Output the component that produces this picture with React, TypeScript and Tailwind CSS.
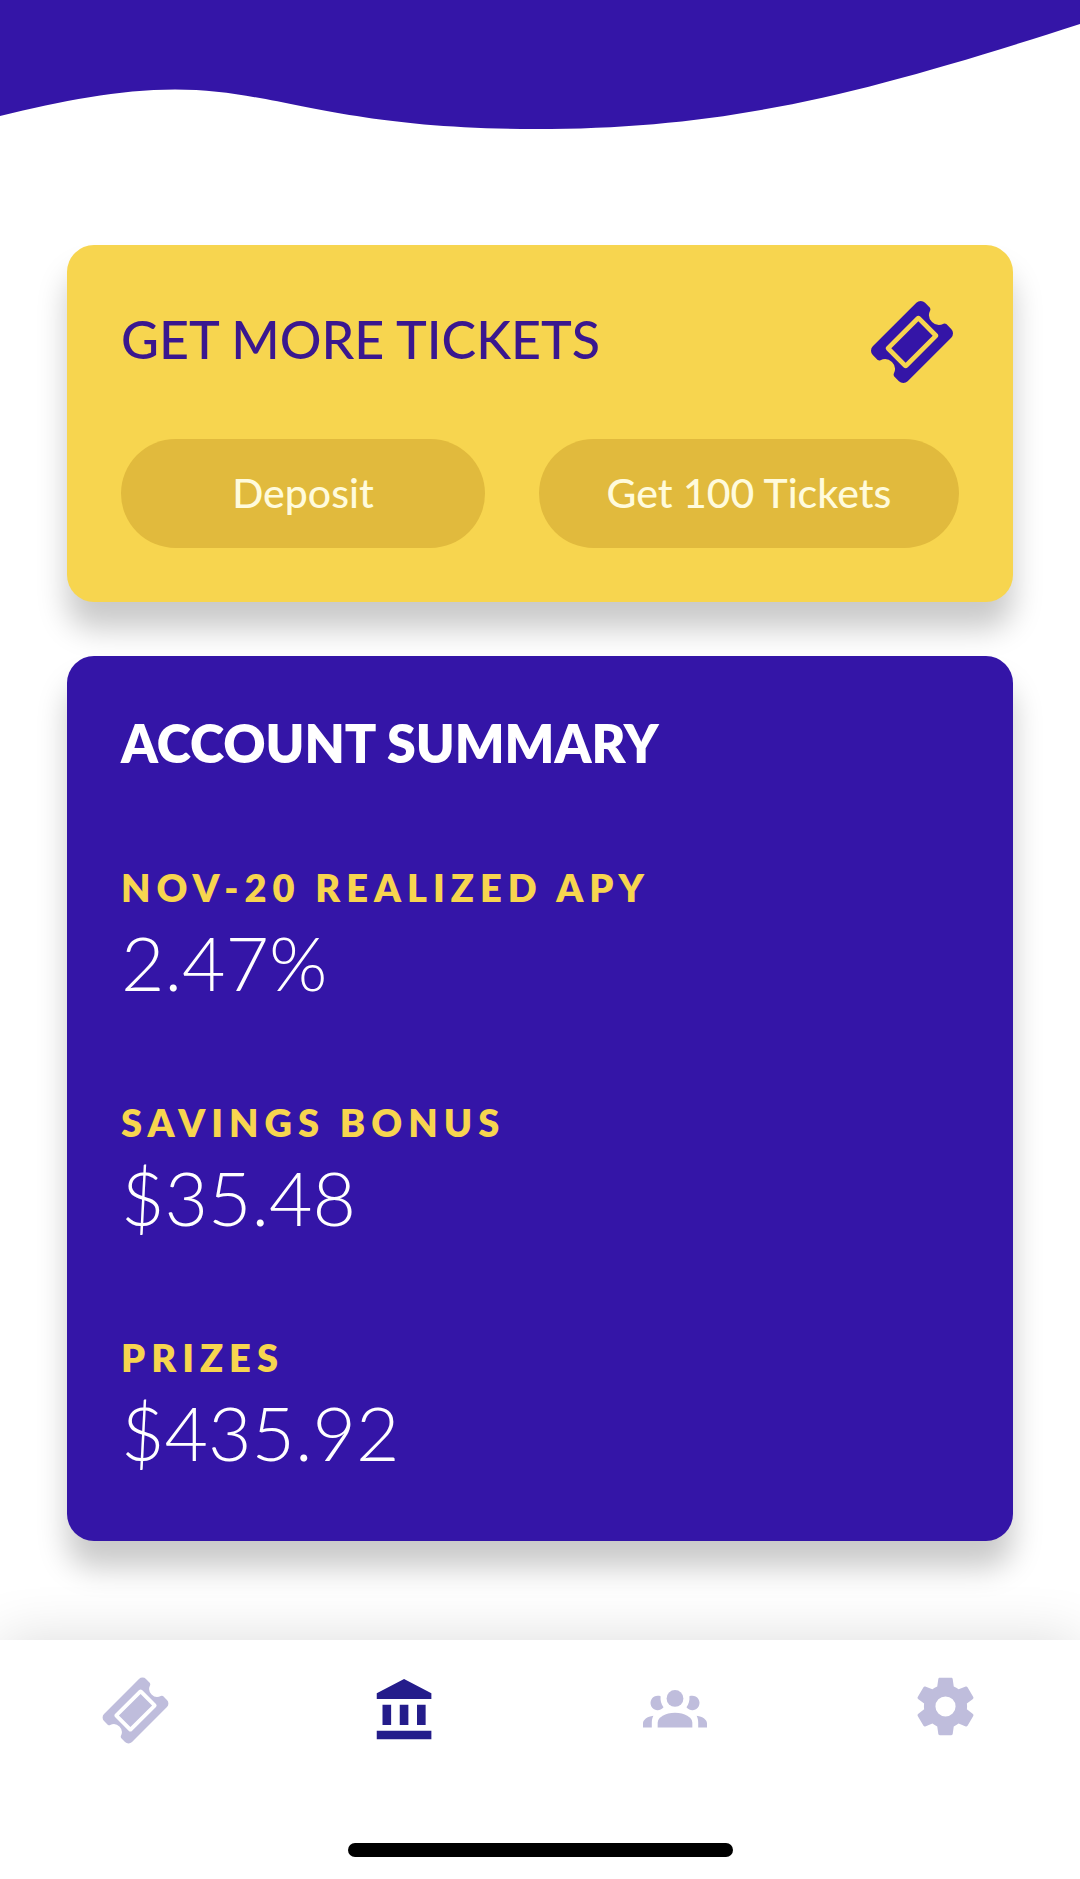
import React from "react";
import type { ReactNode } from "react";

type Stat = {
  label: string;
  value: string;
};

type Tab = {
  name: string;
  href: string;
  icon: ReactNode;
  active?: boolean;
};

type IconProps = {
  className?: string;
};

const stats: Stat[] = [
  { label: "NOV-20 REALIZED APY", value: "2.47%" },
  { label: "SAVINGS BONUS", value: "$35.48" },
  { label: "PRIZES", value: "$435.92" },
];

const cardClassName =
  "rounded-[27px] px-[54px] shadow-[0_27px_30px_rgba(0,0,0,0.21)]";
const pillClassName =
  "h-[109px] rounded-full bg-[#e1ba3d] pb-0.5 text-[41px] font-medium text-[#fffbdc]";

function TicketIcon({ className }: IconProps) {
  return (
    <svg viewBox="-335 -335 670 670" fill="currentColor" className={className}>
      <g transform="rotate(-45)">
        <path
          fillRule="evenodd"
          d="M-240-192H240a48 48 0 0 1 48 48V-90q-6 14-14 16A78 78 0 0 0 274 74q8 2 14 16V144a48 48 0 0 1-48 48H-240a48 48 0 0 1-48-48V90q6-14 14-16A78 78 0 0 0-274-74q-8-2-14-16V-144a48 48 0 0 1 48-48zM-162-116a24 24 0 0 0-24 24V92a24 24 0 0 0 24 24H162a24 24 0 0 0 24-24V-92a24 24 0 0 0-24-24zM-149-79H149V79H-149z"
        />
      </g>
    </svg>
  );
}

function BankIcon({ className }: IconProps) {
  return (
    <svg viewBox="0 0 24 24" fill="currentColor" className={className}>
      <path d="M11.5 1 2 6v2h19V6M16 10v7h3v-7M2 22h19v-3H2M10 10v7h3v-7M4 10v7h3v-7H4z" />
    </svg>
  );
}

function GroupIcon({ className }: IconProps) {
  return (
    <svg viewBox="0 1.8 24 24" fill="currentColor" className={className}>
      <circle cx="12" cy="9.1" r="3.15" />
      <path d="M5.6 8.1c.35 0 .68.06 1 .18-.15 1.5.2 2.9 1.1 4.1A2.7 2.7 0 1 1 5.6 8.1z" />
      <path d="M18.4 8.1c-.35 0-.68.06-1 .18.15 1.5-.2 2.9-1.1 4.1A2.7 2.7 0 1 0 18.4 8.1z" />
      <path d="M5.5 18.25c0-2.07 2.91-3.75 6.5-3.75s6.5 1.68 6.5 3.75V20h-13v-1.75z" />
      <path d="M0 20v-1.5c0-1.39 1.5-2.56 3.9-2.9-.4.68-.6 1.62-.6 2.65V20H0z" />
      <path d="M24 20v-1.5c0-1.39-1.5-2.56-3.9-2.9.4.68.6 1.62.6 2.65V20H24z" />
    </svg>
  );
}

function CogIcon({ className }: IconProps) {
  return (
    <svg viewBox="0 1.4 24 24" fill="currentColor" className={className}>
      <path d="M12,15.5A3.5,3.5 0 0,1 8.5,12A3.5,3.5 0 0,1 12,8.5A3.5,3.5 0 0,1 15.5,12A3.5,3.5 0 0,1 12,15.5M19.43,12.97C19.47,12.65 19.5,12.33 19.5,12C19.5,11.67 19.47,11.34 19.43,11L21.54,9.37C21.73,9.22 21.78,8.95 21.66,8.73L19.66,5.27C19.54,5.05 19.27,4.96 19.05,5.05L16.56,6.05C16.04,5.66 15.5,5.32 14.87,5.07L14.5,2.42C14.46,2.18 14.25,2 14,2H10C9.75,2 9.54,2.18 9.5,2.42L9.13,5.07C8.5,5.32 7.96,5.66 7.44,6.05L4.95,5.05C4.73,4.96 4.46,5.05 4.34,5.27L2.34,8.73C2.21,8.95 2.27,9.22 2.46,9.37L4.57,11C4.53,11.34 4.5,11.67 4.5,12C4.5,12.33 4.53,12.65 4.57,12.97L2.46,14.63C2.27,14.78 2.21,15.05 2.34,15.27L4.34,18.73C4.46,18.95 4.73,19.03 4.95,18.95L7.44,17.94C7.96,18.34 8.5,18.68 9.13,18.93L9.5,21.58C9.54,21.82 9.75,22 10,22H14C14.25,22 14.46,21.82 14.5,21.58L14.87,18.93C15.5,18.67 16.04,18.34 16.56,17.94L19.05,18.95C19.27,19.03 19.54,18.95 19.66,18.73L21.66,15.27C21.78,15.05 21.73,14.78 21.54,14.63L19.43,12.97Z" />
    </svg>
  );
}

const tabs: Tab[] = [
  {
    name: "Tickets",
    href: "#tickets",
    icon: <TicketIcon className="size-[69px]" />,
  },
  {
    name: "Account",
    href: "#account",
    icon: <BankIcon className="size-[69px]" />,
    active: true,
  },
  {
    name: "Community",
    href: "#community",
    icon: <GroupIcon className="size-16" />,
  },
  {
    name: "Settings",
    href: "#settings",
    icon: <CogIcon className="size-[69px]" />,
  },
];

function Wave() {
  return (
    <svg
      viewBox="0 0 1080 130"
      preserveAspectRatio="none"
      className="block h-[130px] w-full text-[#3415a7]"
      fill="currentColor"
      aria-hidden="true"
    >
      <path d="M0 0H1080V24C865 93 731 129 535 129C333 129 277 89.5 175 89.5C118 89.5 62 101 0 116Z" />
    </svg>
  );
}

function TicketsCard() {
  return (
    <section className={`${cardClassName} bg-[#f7d54f] py-[54px]`}>
      <div className="flex items-start justify-between">
        <h2 className="text-[52px] leading-[80px] font-medium text-[#3a178f]">
          GET MORE TICKETS
        </h2>
        <TicketIcon className="mr-1 size-[86px] text-[#3415a7]" />
      </div>
      <div className="mt-[54px] flex gap-[54px]">
        <button type="button" className={`${pillClassName} flex-[13]`}>
          Deposit
        </button>
        <button type="button" className={`${pillClassName} flex-[15]`}>
          Get 100 Tickets
        </button>
      </div>
    </section>
  );
}

function SummaryCard() {
  return (
    <section className={`${cardClassName} bg-[#3415a7] pt-[54px] pb-[59px]`}>
      <h2 className="text-[52px] leading-[66px] font-extrabold text-white">
        ACCOUNT SUMMARY
      </h2>
      <dl className="mt-[86px] flex flex-col gap-[85px]">
        {stats.map((stat) => (
          <div key={stat.label}>
            <dt className="text-[38px] leading-[50px] font-extrabold tracking-[6px] text-[#f7d54f]">
              {stat.label}
            </dt>
            <dd className="text-[75px] leading-[100px] font-light text-white">
              {stat.value}
            </dd>
          </div>
        ))}
      </dl>
    </section>
  );
}

function TabBar() {
  return (
    <nav className="relative bg-white pt-9 pb-[22px] shadow-[0_0_54px_rgba(0,0,0,0.14)]">
      <ul className="grid grid-cols-4">
        {tabs.map((tab) => (
          <li key={tab.name}>
            <a
              href={tab.href}
              aria-label={tab.name}
              className={`flex h-[69px] items-center justify-center ${
                tab.active ? "text-[#241c8b]" : "text-[#bfbddc]"
              }`}
            >
              {tab.icon}
            </a>
          </li>
        ))}
      </ul>
      <div className="mx-auto mt-[98px] h-3.5 w-[385px] rounded-full bg-black" />
    </nav>
  );
}

export default function App() {
  return (
    <div className="flex min-h-screen flex-col bg-white font-['Lato',sans-serif]">
      <Wave />
      <main className="flex flex-1 flex-col gap-[54px] px-[67px] pt-[115px] pb-[99px]">
        <TicketsCard />
        <SummaryCard />
      </main>
      <TabBar />
    </div>
  );
}
